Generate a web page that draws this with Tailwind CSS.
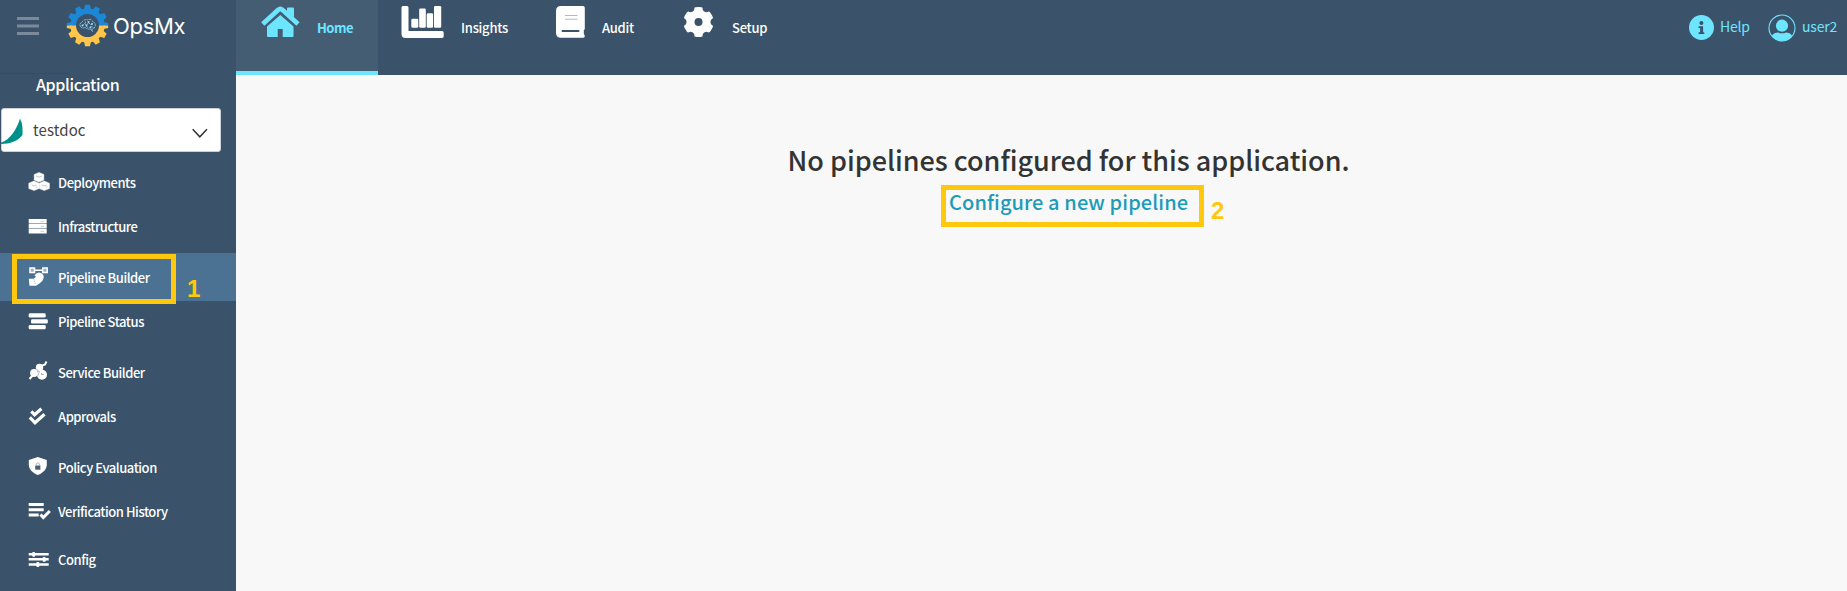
<!DOCTYPE html>
<html lang="en">
<head>
<meta charset="utf-8">
<title>OpsMx</title>
<script src="https://cdn.jsdelivr.net/npm/@tailwindcss/browser@4"></script>
</head>
<body class="relative flex h-[591px] w-[1847px] overflow-hidden bg-[#f8f8f8] font-['Noto_Sans_CJK_SC','Noto_Sans_CJK_JP',sans-serif] whitespace-nowrap">

<aside class="flex h-[591px] w-[236px] shrink-0 flex-col bg-[#3a536a] text-white">
  <div class="flex h-[73px] items-start">
    <svg class="mt-4 ml-[17px] h-5 w-[22px] fill-[#7b8a99]" viewBox="17 16 22 20"><path d="M17 17h22v3H17zM17 24.500h22v3H17zM17 32h22v3H17z"/></svg>
    <svg class="mt-1 ml-[27px] h-[43px] w-[43px]" viewBox="-21.500 -21.500 43 43">
      <defs>
        <clipPath id="top"><path d="M-22-22h44v22h-44z"/></clipPath>
        <clipPath id="bottom"><path d="M-22 0h44v22h-44z"/></clipPath>
        <g id="gear">
          <circle r="14.300" fill="none" stroke="currentColor" stroke-width="5.600"/>
          <g id="t3" fill="currentColor"><path id="tooth" d="M-3.500-16L-2.400-20.700H2.400L3.500-16zM-3.500 16L-2.400 20.700H2.400L3.500 16z"/><use href="#tooth" transform="rotate(30)"/><use href="#tooth" transform="rotate(60)"/></g>
          <use href="#t3" transform="rotate(90)"/>
        </g>
      </defs>
      <g clip-path="url(#top)" class="text-[#1c87d6]"><use href="#gear"/></g>
      <g clip-path="url(#bottom)" class="text-[#ffc64b]"><use href="#gear"/></g>
      <g fill="none" stroke="#7fc1e6" stroke-width="1"><path d="M-7 1c-1.500-2 0-4 1.500-4C-5-5-2-6.500 0-5.500 2-7 5-5.500 5.500-3.500 8-3 8.500 0 7 1.500 7 3.500 5 4 4 3.500L5 6 2.500 3.500C0 4-1 2.500-2.500 2-4 3-6 2.500-7 1z" stroke-dasharray="2 .7"/><path d="M-5 0l2-2 2 2 2-3 2 2 2-1M-2-4v2M2 2l2-1 2 1M-1 0l1 2" stroke-width=".8"/></g>
      <g fill="#a5d8f0"><circle cx="-5" r="1"/><circle cx="-1" cy="0" r=".9"/><circle cx="1" cy="-3.500" r="1"/><circle cx="4.500" cy="-1.500" r="1"/><circle cx="3" cy="2" r=".9"/></g>
    </svg>
    <div class="mt-[12px] ml-1 font-['Inter',sans-serif] text-[22px] leading-7 font-normal tracking-[-0.3px]">OpsMx</div>
  </div>
  <div class="h-[1px] w-[69px] bg-[#3d4a59]"></div>
  <div class="-mt-[2px] flex h-[36px] items-start pl-[36px] text-base leading-[24px] font-medium tracking-[-0.35px]">Application</div>
  <div class="relative ml-[1px] flex h-[44px] w-[220px] items-center rounded-[3px] border border-[#cdd0d5] bg-white text-[#444]">
    <svg class="absolute -left-[1px] top-[8px] h-[28px] w-[23px] fill-[#008f89]" viewBox="1 116 23 28"><path d="M20 117.500C17 128 10 139 1 141.500V143C10 143 18 140 22.500 134V127Q22 121 20 117.500Z"/></svg>
    <span class="ml-[31px] text-[15px] leading-6 tracking-[0.1px]">testdoc</span>
    <svg class="absolute left-[190px] top-[19px] h-3 w-4 fill-none stroke-[#333]" viewBox="0 0 16 12" stroke-width="1.500"><path d="M.7 1.200L7.800 8.800 15 1.200"/></svg>
  </div>

  <nav class="mt-[9px] flex flex-col text-[13px] leading-5 font-medium tracking-[-0.46px]">
    <div class="flex h-11 items-center pl-[26px]">
      <svg class="mr-[6px] h-6 w-[26px] fill-white" viewBox="26 171 26 24">
        <path d="M39 172.500l4.800 2v5.500L39 182l-4.800-2v-5.500zM34 181l5 2.200v5.300l-5 2-5.200-2v-5.300zM44.200 181l5.200 2.200v5.300l-5.200 2-5-2v-5.300z" stroke="#fff" stroke-width=".5" stroke-linejoin="round"/>
        <path d="M36 176l3 1.200 3-1.200M31.500 185l2.500 1 2.500-1M41.700 185l2.500 1 2.500-1M36 187.500l1.500-.7M46 187.500l1.500-.7" fill="none" stroke="#a3b0bc" stroke-width=".7"/>
      </svg><span class="-mt-px">Deployments</span></div>
    <div class="flex h-11 items-center pl-[26px]">
      <svg class="mr-[6px] h-6 w-[26px] fill-white" viewBox="26 215 26 24">
        <rect x="28.700" y="219" width="18" height="4.500" rx=".6"/><rect x="28.700" y="224" width="18" height="4.500" rx=".6"/><rect x="28.700" y="229" width="18" height="4.500" rx=".6"/>
        <path d="M40.500 221.300h3.500M40.500 226.300h3.500M40.500 231.300h3.500" stroke="#b7c2cb" stroke-width=".8"/>
      </svg><span class="-mt-px">Infrastructure</span></div>
    <div class="mt-1 flex h-12 items-center bg-[#4b7293] pl-[26px]">
      <svg class="mr-[6px] h-6 w-[26px] fill-white" viewBox="26 265 26 24">
        <path d="M30 268h4.500v4.500H30zM42.700 268h4.500v4.500h-4.500z" fill="#9bb2c5" stroke="#fff" stroke-width="1.500"/>
        <path d="M35 269.500h7v1.500h-7z"/>
        <path d="M34.500 275.500q2.500-4 6.500-2.500 3.500 1.500 2.500 5.500-.8 3-4 5l-3.500 2.300H29.500l-.7-7h5l2.200-2z"/>
        <path d="M33.500 278.500l2 5.500" fill="none" stroke="#a7bccd" stroke-width=".6"/>
      </svg><span class="mt-px">Pipeline Builder</span></div>
    <div class="flex h-[42px] items-center pl-[26px]">
      <svg class="mr-[6px] h-6 w-[26px] fill-white" viewBox="26 310 26 24"><rect x="28.700" y="313.200" width="17" height="4.400" rx="1.300"/><rect x="31" y="319.200" width="16.800" height="4.400" rx="1.300"/><rect x="28.700" y="325" width="17" height="4.200" rx="1.300"/></svg><span class="-mt-px">Pipeline Status</span></div>
    <div class="mt-[6px] flex h-12 items-center pl-[26px]">
      <svg class="mr-[6px] h-6 w-[26px] fill-white" viewBox="26 361 26 24">
        <circle cx="39.500" cy="367.500" r="3.700"/><circle cx="34" cy="373" r="3.900"/><circle cx="42" cy="374.800" r="5"/>
        <path d="M41 366l4-1.500 1.500-3M33 375l-3.500 4" fill="none" stroke="#fff" stroke-width="2"/>
        <path d="M41.500 373v1.500h2" fill="none" stroke="#8292a1" stroke-width=".8"/><path d="M35.500 368.500l4 3-1.800 4.500" fill="none" stroke="#8796a5" stroke-width=".6"/>
      </svg><span class="-mt-px">Service Builder</span></div>
    <div class="flex h-10 items-center pl-[26px]">
      <svg class="mr-[6px] h-6 w-[26px] fill-none stroke-white" viewBox="26 405 26 24" stroke-width="3.200"><path d="M31.300 411.300l3.300 3.500 6.800-6M29.800 417.300l5.200 5.500 9.500-8.600"/></svg><span class="-mt-px">Approvals</span></div>
    <div class="mt-2 flex h-[46px] items-center pl-[26px]">
      <svg class="mr-[6px] h-6 w-[26px] fill-white" viewBox="26 456 26 24"><path d="M37.800 457l9 3v4.500c0 5-4 8.500-9 10.500-5-2-9-5.500-9-10.500V460z"/><rect x="35.200" y="465.500" width="5.200" height="4.200" fill="#4a6075"/><path d="M36.200 465.500v-1.800q1.600-1.800 3.200 0v1.800" fill="none" stroke="#94a3b0" stroke-width=".8"/></svg><span class="-mt-px">Policy Evaluation</span></div>
    <div class="flex h-[42px] items-center pl-[26px]">
      <svg class="mr-[6px] h-6 w-[26px] fill-white" viewBox="26 500 26 24"><path d="M28.700 503h15v3h-15zM28.700 508.200h15v3h-15zM28.700 513.500h10v3h-10z"/><path d="M40.500 514.500l2.800 3 6.500-6.500" fill="none" stroke="#fff" stroke-width="3"/></svg><span class="-mt-px">Verification History</span></div>
    <div class="mt-[5px] flex h-11 items-center pl-[26px]">
      <svg class="mr-[6px] h-6 w-[26px] fill-white" viewBox="26 548 26 24"><path d="M28.700 553h20v2.600h-20zM28.700 558h20v2.600h-20zM28.700 563.200h20v2.600h-20z"/><rect x="32.200" y="552" width="3" height="4.800" rx="1"/><rect x="42.700" y="556.900" width="3" height="4.800" rx="1"/><rect x="36.300" y="562.100" width="3" height="4.800" rx="1"/></svg><span class="-mt-px">Config</span></div>
  </nav>
</aside>

<main class="flex grow flex-col">
  <header class="flex h-[75px] justify-between bg-[#3a536a]">
    <nav class="flex text-[13px] leading-5 font-medium tracking-[-0.25px] text-white">
      <div class="flex h-[75px] w-[142px] items-start border-b-4 border-[#6ee5ff] bg-[#445d73] pl-[25px] text-[#6ee5ff]">
        <svg class="mt-[6px] h-[32px] w-[39px] fill-[#6ee5ff]" viewBox="261 6 39 32"><path d="M287 8.500q0-1 1-1h5q1 0 1 1v9l-7-6z"/><path d="M262.800 24L278 10q2.300-2 4.600 0L298 24" fill="none" stroke="#6ee5ff" stroke-width="4.800"/><path d="M280.300 15L293.500 26.500V36q0 1-1 1H282.700V29h-5v8H268q-1 0-1-1V26.500z"/><path d="M266 26L280.300 13.800 294.500 26" fill="none" stroke="#445d73" stroke-width=".7"/></svg>
        <span class="mt-[18px] ml-[17px] font-bold tracking-[-0.5px]">Home</span>
      </div>
      <div class="flex w-[156px] items-start pl-[22px]">
        <svg class="mt-[5px] h-[34px] w-[44px] fill-white" viewBox="400 5 44 34"><path d="M401.500 7.500q0-1.500 1.500-1.500h4q1.500 0 1.500 1.500V31H442q1.700 0 1.700 1.700v3.500q0 1.700-1.700 1.700H405.500q-4 0-4-4z"/><rect x="411.300" y="18.800" width="7" height="9" rx="1.300"/><rect x="419.200" y="8.500" width="6.600" height="19.300" rx="1.300"/><rect x="426.700" y="13.300" width="6.400" height="14.500" rx="1.300"/><rect x="434" y="6" width="7.200" height="21.800" rx="1.300"/></svg>
        <span class="mt-[18px] ml-[17px]">Insights</span>
      </div>
      <div class="flex w-[128px] items-start pl-[21px]">
        <svg class="mt-[5px] h-[34px] w-[31px] fill-white" viewBox="555 5 31 34"><path d="M561 6h22q1.800 0 1.800 1.800V28.500q0 1-1 1.800v4q1 .7 1 1.700 0 1.800-1.500 1.800H561q-5 0-5-5V11q0-5 5-5z"/><path d="M565 15.500h12.500M565 19.200h12.500" fill="none" stroke="#b0bbc5" stroke-width="1"/><path d="M562.500 31h16" fill="none" stroke="#3a536a" stroke-width="2" stroke-linecap="round"/></svg>
        <span class="mt-[18px] ml-4">Audit</span>
      </div>
      <div class="flex items-start pl-[20px]">
        <svg class="mt-[5px] h-[34px] w-[32px] fill-white" viewBox="-16.500 -17 32 34"><g id="s"><path id="st" d="M-6.500-9.500L-4.300-12-4-14.200Q-4-15 0-15T4-14.200L4.300-12 6.500-9.500V9.500L4.300 12 4 14.200Q4 15 0 15T-4 14.200L-4.300 12-6.500 9.500z"/><use href="#st" transform="rotate(60)"/><use href="#st" transform="rotate(120)"/></g><circle r="11.300"/><circle r="4" fill="#3a536a"/></svg>
        <span class="mt-[18px] ml-[18px]">Setup</span>
      </div>
    </nav>
    <div class="flex items-start text-[14px] leading-6 tracking-[-0.2px] text-[#6ee5ff]">
      <svg class="mt-[15px] h-[25px] w-[25px]" viewBox="0 0 25 25"><circle cx="12.500" cy="12.500" r="12.500" fill="#6ee5ff"/><g fill="#3a536a"><circle cx="12.400" cy="8" r="2"/><path d="M9.600 11.200h4.500v6h1.200v1.800H9.600v-1.800h1.500V13H9.600z"/></g></svg>
      <span class="mt-[14px] ml-[6px] w-[48px]">Help</span>
      <svg class="mt-[14px] h-[28px] w-[28px]" viewBox="0 0 28 28"><defs><clipPath id="av"><circle cx="14" cy="14" r="13"/></clipPath></defs><circle cx="14" cy="14" r="13" fill="none" stroke="#6ee5ff" stroke-width="1.100"/><g fill="#6ee5ff" clip-path="url(#av)"><circle cx="14" cy="11.700" r="6.100"/><path d="M3 26q0-7.500 7-7.500 4 1.700 8 0 7 0 7 7.500v3H3z"/></g></svg>
      <span class="mt-[14px] ml-[6px] w-[45px]">user2</span>
    </div>
  </header>
  <section class="flex flex-col items-center pl-[54px]">
    <h1 class="mt-[65px] text-[27px] leading-10 font-medium tracking-[-0.02px] text-[#333]">No pipelines configured for this application.</h1>
    <div class="relative mt-[5px] ml-2 flex h-[42px] w-[263px] items-start justify-start border-[5px] border-[#ffc80e] pl-[3px]">
      <a class="-mt-px text-[20px] leading-[26px] font-medium tracking-[0.1px] text-[#1c9bb8]">Configure a new pipeline</a>
      <span class="absolute top-[7px] left-[265px] font-['Liberation_Sans',sans-serif] text-2xl leading-[28px] font-bold text-[#ffc80e]">2</span>
    </div>
  </section>
</main>

<div class="absolute top-[254px] left-[12px] h-[50px] w-[164px] border-[5px] border-[#ffc80e]"></div>
<span class="absolute top-[275px] left-[187px] font-['Liberation_Sans',sans-serif] text-2xl leading-[28px] font-bold text-[#ffc80e]">1</span>
</body>
</html>
